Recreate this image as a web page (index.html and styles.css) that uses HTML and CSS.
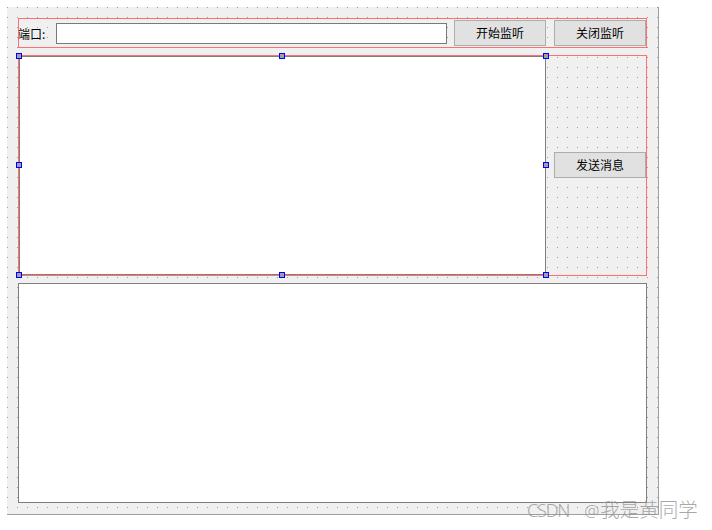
FILE: index.html
```html
<!DOCTYPE html>
<html lang="zh-CN">
<head>
<meta charset="utf-8">
<title>Server</title>
<link rel="stylesheet" href="styles.css">
</head>
<body>
<div class="form">
  <div class="layout top-row">
    <span class="label">端口:</span>
    <div class="line-edit"></div>
    <button class="btn btn-start">开始监听</button>
    <button class="btn btn-close">关闭监听</button>
  </div>
  <div class="layout mid-row">
    <div class="text-edit selected">
      <span class="handle h-tl"></span>
      <span class="handle h-tc"></span>
      <span class="handle h-tr"></span>
      <span class="handle h-ml"></span>
      <span class="handle h-mr"></span>
      <span class="handle h-bl"></span>
      <span class="handle h-bc"></span>
      <span class="handle h-br"></span>
    </div>
    <div class="side">
      <button class="btn">发送消息</button>
    </div>
  </div>
  <div class="text-edit bottom-edit"></div>
</div>
<div class="watermark"><span class="wm-latin">CSDN</span><span class="wm-at">@</span><span class="wm-cjk">我是黄同学</span></div>
</body>
</html>
```

FILE: styles.css
```css
html, body {
  margin: 0;
  padding: 0;
  background: #ffffff;
}

body {
  padding: 7px 0 0 7px;
  font-family: "Noto Sans CJK SC", "Liberation Sans", sans-serif;
  font-size: 12px;
  color: #000;
}

.form {
  box-sizing: border-box;
  width: 652px;
  height: 508px;
  padding: 11px 11px 0 11px;
  background-color: #f0f0f0;
  background-image: conic-gradient(from 270deg at 1px 1px, #a0a0a0 90deg, transparent 90deg);
  background-size: 10px 10px;
  background-position: 0 0;
  border-right: 1px solid #a0a0a0;
  border-bottom: 1px solid #a0a0a0;
  display: flex;
  flex-direction: column;
}

.layout {
  box-sizing: border-box;
  width: 629px;
  border: 1px solid #ff7070;
  display: flex;
}

.top-row {
  height: 30px;
  align-items: center;
}

.label {
  width: 37px;
  flex: none;
  line-height: 16px;
  margin-top: 1px;
  margin-left: -1px;
  margin-right: 1px;
}

.line-edit {
  box-sizing: border-box;
  width: 391px;
  height: 21px;
  flex: none;
  background: #fff;
  border: 1px solid #7a7a7a;
  margin-top: 1px;
  margin-right: 7px;
}

.btn {
  box-sizing: border-box;
  width: 92px;
  height: 26px;
  flex: none;
  margin: 0;
  padding: 0;
  background: #e1e1e1;
  border: 1px solid #adadad;
  font-family: "Noto Sans CJK SC", "Liberation Sans", sans-serif;
  font-size: 12px;
  color: #000;
  line-height: 24px;
}

.btn-close {
  margin-left: 8px;
}

.mid-row {
  height: 221px;
  margin-top: 7px;
}

.text-edit {
  box-sizing: border-box;
  background: #fff;
  border: 1px solid #7f7f7f;
  position: relative;
}

.mid-row .text-edit {
  width: 527px;
  height: 219px;
  flex: none;
}

.side {
  flex: 1;
  display: flex;
  align-items: center;
  justify-content: flex-end;
}

.side .btn {
  height: 26px;
  margin-top: -1px;
}

.bottom-edit {
  width: 629px;
  height: 220px;
  margin-top: 7px;
}

.handle {
  position: absolute;
  box-sizing: border-box;
  width: 6px;
  height: 6px;
  background: #a0a0a0;
  border: 1px solid #0000ff;
}

.h-tl { left: -4px; top: -4px; }
.h-tc { left: 259px; top: -4px; }
.h-tr { right: -4px; top: -4px; }
.h-ml { left: -4px; top: 105px; }
.h-mr { right: -4px; top: 105px; }
.h-bl { left: -4px; bottom: -4px; }
.h-bc { left: 259px; bottom: -4px; }
.h-br { right: -4px; bottom: -4px; }

.watermark {
  position: absolute;
  left: 527px;
  top: 497px;
  white-space: nowrap;
  color: rgba(140, 140, 140, 0.75);
  line-height: 24px;
  display: flex;
  align-items: baseline;
}

.wm-latin {
  font-family: "Noto Sans", sans-serif;
  font-size: 18px;
  font-weight: 300;
  letter-spacing: -1.2px;
}

.wm-at {
  font-family: "Noto Sans", sans-serif;
  font-size: 17px;
  font-weight: 300;
  margin-left: 15px;
  margin-right: 1px;
}

.wm-cjk {
  font-family: "Noto Sans CJK SC", sans-serif;
  font-size: 19.5px;
  font-weight: 300;
}
```
